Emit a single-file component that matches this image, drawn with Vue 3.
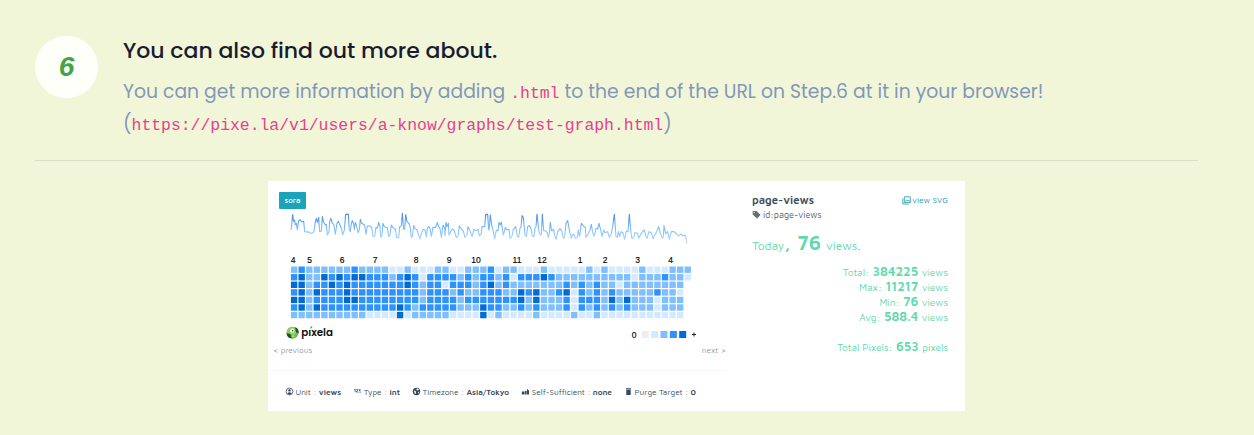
<script setup>
const rows = [
  '23222222322221121' + '112211222312211121' + '111121211112111222',
  '34224343443332343' + '133332323323133343' + '222222222212223221',
  '44233434333333343' + '233133323423222222' + '232323221222222220',
  '34243334333333333' + '233323223332243422' + '341323232222232210',
  '44233334433333333' + '233332333333342422' + '231333242422212220',
  '34243333333333432' + '333332224332232322' + '231323232322212220',
  '22222222221111412' + '222211114121111211' + '112112111111111110'
].map(r => r.split('').map(Number))

const months = [
  [25, '4'], [41.5, '5'], [74, '6'], [107, '7'], [148, '8'], [181, '9'], [208, '10'],
  [249, '11'], [274, '12'], [312, '1'], [337, '2'], [369.5, '3'], [402.5, '4']
]

const first = '68,150 70,145 74,104 77,125 80,120 82,135 85,130 88,150 92,122 97,119 100,125 107,124 110,155 125,157 130,161 138,155 141,130 145,115 148,128 152,112 155,155 160,153 163,110 166,125 172,135 175,133 178,165 183,155 185,125 189,115 192,128 198,135 202,163 207,130 211,124 215,133 220,145 224,165 229,150 233,103 241,103 244,150 247,155 250,130 253,122 257,132 259,150 262,127 266,138 270,158 274,150 277,118 281,130 290,135 294,163 298,138 305,138 311,142 315,170 320,168 324,142 328,145 332,127 336,140 338,172 342,165 345,130 349,140 358,143 362,170 366,165 370,135 375,143 382,147 386,173 392,172 395,140 400,138 403,100 407,148 410,147 413,104 417,125 423,130 426,140 430,173 433,170 437,137 441,145 447,150 452,165 456,177 461,158 465,148 471,150 475,170 478,145 482,140 486,145 490,170 495,142 503,142 508,128 512,140 516,145 520,173 525,135 530,145 531,168 534,127 537,140 541,130 543,165 548,155 553,147 558,150 565,173 570,168 574,138 580,147 586,153 591,172 597,165 600,140 606,152 612,170 618,148 624,152 630,148 634,168 640,160 642,140 650,140 653,103 659,103 662,150 664,145 667,105 671,135 676,155 680,177 685,150 690,153 693,127'
const second = '0,135 4,127 10,165 16,142 20,150 27,148 30,175 36,168 40,148 47,140 52,170 56,172 60,145 63,142 66,107 70,112 75,165 79,170 83,140 88,137 93,145 97,168 102,170 105,145 108,140 111,103 117,155 121,165 124,163 127,103 131,152 138,153 142,158 145,172 148,160 151,127 155,153 161,148 165,170 168,178 173,155 180,146 186,155 190,175 194,172 198,130 203,122 208,150 214,175 218,163 223,165 226,175 232,172 235,150 239,170 244,130 251,138 256,142 258,172 264,163 270,150 274,133 278,158 283,168 288,145 293,147 297,130 302,150 306,170 311,150 315,158 323,155 328,172 333,165 338,140 343,103 348,170 352,173 355,155 359,170 363,155 369,158 374,178 379,153 384,155 388,103 393,160 396,176 401,172 405,158 413,160 416,175 425,158 433,150 438,170 441,175 447,155 454,158 459,176 464,165 470,155 476,140 481,160 487,175 490,170 492,137 497,162 503,155 508,178 514,155 522,155 530,162 535,168 543,162 549,168 555,165 558,172 560,190'
const trend = first + ' ' + second.split(' ').map(p => {
  const [x, y] = p.split(',').map(Number)
  return `${x + 696},${y}`
}).join(' ')

const stats = [
  ['Total:', '384225', 'views'],
  ['Max:', '11217', 'views'],
  ['Min:', '76', 'views'],
  ['Avg:', '588.4', 'views']
]
</script>

<template>
  <main class="page">
    <header class="step">
      <div class="badge">6</div>
      <div class="copy">
        <h2>You can also find out more about.</h2>
        <p>You can get more information by adding <code>.html</code> to the end of the URL on Step.6 at it in your browser!</p>
        <p>(<code>https://pixe.la/v1/users/a-know/graphs/test-graph.html</code>)</p>
      </div>
    </header>

    <section class="card">
      <div class="left">
        <span class="theme">sora</span>
        <svg class="chart" width="459" height="136" viewBox="0 28 459 136">
          <defs>
            <linearGradient id="trend" gradientUnits="userSpaceOnUse" x1="0" y1="100" x2="0" y2="190">
              <stop offset="0" stop-color="#438bdd" />
              <stop offset=".5" stop-color="#7dbdff" />
              <stop offset="1" stop-color="#b5dbff" />
            </linearGradient>
          </defs>
          <g transform="translate(0 -1) scale(.33333)">
            <polyline :points="trend" fill="none" stroke="url(#trend)" stroke-width="3.3" stroke-linejoin="round" />
          </g>
          <text v-for="[x, m] in months" :key="x" :x="x" y="82.2" class="month">{{ m }}</text>
          <g v-for="(row, r) in rows" :key="r">
            <template v-for="(v, c) in row" :key="c">
              <rect v-if="v" :x="22.9 + c * 7.57" :y="85.5 + r * 7.56" width="6.4" height="6.4" :class="'l' + v" />
            </template>
          </g>
          <g transform="translate(18 145)">
            <circle cx="6.5" cy="6.7" r="6" fill="#6eb94c" />
            <path d="M1 5.5C3 1 8 0 11 3l1 3-4 3-7-1z" fill="#8bd15d" />
            <path d="M.6 7l3 .8 2.2 2.2 3.2-.6C8 13 3 13 1.4 10z" fill="#244b32" />
            <path d="M9 1.2c3 .6 4 3 3.6 6L10 6.5z" fill="#255637" />
            <path d="M5 10l3-2 1 3-3 1z" fill="#a6d960" />
            <circle cx="6.3" cy="4.7" r="2.1" fill="#fff" /><circle cx="6.7" cy="4.8" r=".8" fill="#163525" />
          </g>
          <text x="33.2" y="155.3" class="brand" textLength="31.8" lengthAdjust="spacingAndGlyphs">pıxela</text>
          <path d="M42.4 147.3l1.7-2" stroke="#4eaa45" stroke-width="1.3" />
          <text x="366" y="157" class="month">0</text>
          <rect v-for="i in 5" :key="i" :x="373.8 + (i - 1) * 9.35" y="150" width="7" height="7" :class="'l' + (i - 1)" />
          <path d="M424 153.5h4M426 151.5v4" stroke="#223" stroke-width="1" />
        </svg>
        <nav><span>&lt; previous</span><span>next &gt;</span></nav>
        <footer>
          <div><svg width="9" height="9" viewBox="0 0 9 9"><circle cx="4.5" cy="4.5" r="3.4" class="o" /><circle cx="4.5" cy="3.4" r="1.2" /><path d="M2.3 6.6Q4.5 4 6.7 6.6L5 7.8z" /></svg><span>Unit : <b>views</b></span></div>
          <div><svg width="9" height="9" viewBox="0 0 9 9"><path d="M1.2 2.7l1-.5v3M3.2 2.7q1.8-1 1.7.4L3.2 5h2M5.5 2.7h1.9L6.4 4q1.9.5.3 2" class="o" /></svg><span>Type : <b>int</b></span></div>
          <div><svg width="9" height="9" viewBox="0 0 9 9"><circle cx="4.5" cy="4.5" r="3.7" /><path d="M2 3.2l2 1.2-.2 2.7-1.2-.9zM5 1.3l2 1.3-1 1-1.7-.5zM6 4.8l1.2.3L6 6.8z" fill="#fff" /></svg><span>Timezone : <b>Asia/Tokyo</b></span></div>
          <div><svg width="9" height="9" viewBox="0 0 9 9"><path d="M.8 4.6h2.5V7.5H.8zM3.8 4h1.7v3.5H3.8zM5.9 3.5l.8-2 .6 1.7H8v4.3H5.9z" /></svg><span>Self-Sufficient : <b>none</b></span></div>
          <div><svg width="9" height="9" viewBox="0 0 9 9"><path d="M2 1.3h5v1H2zM2.3 2.8h4.4V8H2.3z" /></svg><span>Purge Target : <b>0</b></span></div>
        </footer>
      </div>
      <aside>
        <div class="heading"><strong>page-views</strong><span class="link"><svg width="9" height="9" viewBox="0 0 9 9"><path d="M2.3.8h6v5.7h-6zM.8 2.5V8h6M3 5.8l1.5-2L5.6 5l.8-1L8 5.8" class="o" /></svg><span>view SVG</span></span></div>
        <div class="id"><svg width="9" height="9" viewBox="0 0 9 9"><path d="M.7 1h3.8l4 4-3.4 3.4L.7 4.5z" /><circle cx="2.2" cy="2.4" r=".6" fill="#fff" /></svg><span>id:page-views</span></div>
        <div class="today"><span class="day">Today<b>,</b></span><b class="num">76</b><span class="unit">views.</span></div>
        <div class="stats">
          <div v-for="s in stats" :key="s[0]"><span>{{ s[0] }}</span><b>{{ s[1] }}</b><span>{{ s[2] }}</span></div>
          <div class="total"><span>Total Pixels:</span><b>653</b><span>pixels</span></div>
        </div>
      </aside>
    </section>
  </main>
</template>

<style>
body { margin: 0; background: #f1f6d9; }
</style>

<style scoped>
* { box-sizing: border-box; }
.page { height: 435px; padding: 36px 56px 0 35px; background: #f1f6d9; font-family: Poppins, Inter, sans-serif; overflow: hidden; }
.step { display: flex; gap: 25px; height: 125px; border-bottom: 1px solid #d9dec4; }
.badge { width: 63px; height: 62px; border-radius: 50%; background: #fffffa; color: #43a447; font: italic bold 28px/62px "Liberation Sans", sans-serif; text-align: center; }
.copy { white-space: nowrap; }
h2 { margin: 0; height: 39px; color: #191b30; font-size: 22px; line-height: 29px; font-weight: 500; }
p { margin: 0; height: 32.2px; color: #8496b8; font-size: 18.77px; line-height: 34px; font-weight: 400; }
code { color: #e83e8c; font: 16.42px "Liberation Mono", monospace; }
.card { display: flex; width: 697px; height: 230px; margin: 20px 0 0 233px; background: #fff; font-family: "Maven Pro", "Noto Sans", sans-serif; }
.left { width: 459px; padding-top: 11px; }
.theme { display: block; width: 27px; height: 17px; margin-left: 11px; border-radius: 1px; background: #1aa3b9; color: #f1ffff; font-size: 8px; font-weight: 500; line-height: 17px; text-align: center; }
.chart { display: block; }
.month { font: 8.5px "Liberation Sans", sans-serif; fill: #000; stroke: #000; stroke-width: .15; text-anchor: middle; }
.brand { font: 600 11px Poppins, sans-serif; fill: #111; }
.l0 { fill: #eeeeee; } .l1 { fill: #d6eaff; } .l2 { fill: #7fbfff; } .l3 { fill: #2c92ff; } .l4 { fill: #006bd6; }
nav { display: flex; justify-content: space-between; height: 26px; padding: 0 1px 0 5px; border-bottom: 1px solid #f7f7f7; color: #999c9e; font-size: 8.2px; line-height: 11px; }
footer { display: flex; justify-content: space-between; padding: 14.5px 31px 0 17px; color: #3a4d62; font-size: 8.2px; line-height: 12px; white-space: nowrap; }
footer div { display: flex; align-items: center; gap: 1.5px; }
footer b { font-weight: 600; }
svg { fill: #34495e; }
.o { fill: none; stroke: currentColor; stroke-width: .8; }
aside { width: 196px; margin-left: 25px; padding-top: 12px; color: #5fd9ac; white-space: nowrap; }
.heading { display: flex; justify-content: space-between; height: 14px; line-height: 13px; color: #3c4e62; font-size: 11.3px; }
.heading strong { font-weight: 600; }
.link { display: flex; align-items: center; gap: 1.5px; color: #2099ae; font-size: 8.3px; }
.id { display: flex; gap: 2px; align-items: center; height: 15px; color: #56616b; font-size: 9px; }
.id svg { fill: #636d76; }
.today { display: flex; align-items: baseline; height: 42px; padding-top: 8px; font-size: 12px; line-height: 26px; }
.day { width: 45px; } .day b { font-size: 18px; line-height: 1; } .num { width: 29px; font-size: 20px; font-weight: 600; }
.stats div { display: flex; justify-content: flex-end; align-items: baseline; gap: 3.5px; height: 15px; font-size: 10.1px; line-height: 15px; }
.stats b { font-size: 12.7px; font-weight: 600; }
.stats .total { margin-top: 15px; }
</style>
